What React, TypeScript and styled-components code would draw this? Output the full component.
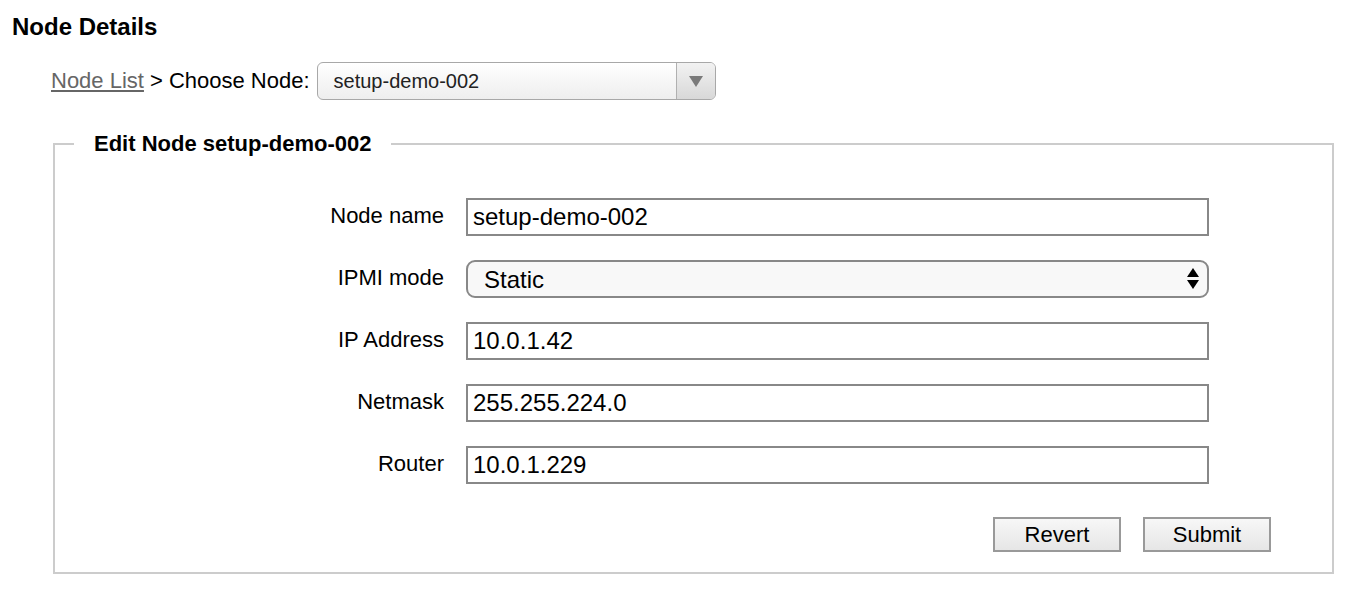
import styled, { createGlobalStyle } from "styled-components";

const GlobalStyle = createGlobalStyle`
  body {
    margin: 0;
    background: #ffffff;
    font-family: "Liberation Sans", Arial, Helvetica, sans-serif;
    color: #000;
  }
`;

const Page = styled.div`
  padding: 13px 0 0 12px;
`;

const Title = styled.h2`
  margin: 0;
  font-size: 24px;
  line-height: 28px;
  font-weight: bold;
`;

const Breadcrumb = styled.div`
  display: flex;
  align-items: center;
  margin: 21px 0 0 39px;
  font-size: 22px;
  height: 38px;
`;

const CrumbLink = styled.a`
  color: #666;
  text-decoration: underline;
  margin-right: 6px;
`;

const CrumbText = styled.span`
  margin-right: 7px;
`;

const NodePicker = styled.div`
  display: flex;
  width: 399px;
  height: 38px;
  box-sizing: border-box;
  border: 1.5px solid #a8a8a8;
  border-radius: 6px;
  background: linear-gradient(#ffffff, #eeeeee);
  overflow: hidden;
`;

const PickerValue = styled.div`
  flex: 1;
  display: flex;
  align-items: center;
  padding-left: 16px;
  font-size: 20px;
  color: #222;
`;

const PickerArrow = styled.div`
  width: 38px;
  border-left: 1.5px solid #b0b0b0;
  background: linear-gradient(#f2f2f2, #d8d8d8);
  display: flex;
  align-items: center;
  justify-content: center;
`;

const Box = styled.fieldset`
  margin: 31px 0 0 41px;
  width: 1281px;
  box-sizing: border-box;
  border: 2px solid #cccccc;
  padding: 41px 61px 20px 19px;
`;

const Legend = styled.legend`
  padding: 0 20px;
  font-size: 22px;
  line-height: 26px;
  font-weight: bold;
`;

const Form = styled.div`
  display: grid;
  grid-template-columns: 370px 743px;
  column-gap: 22px;
  row-gap: 24px;
  align-items: center;
`;

const Label = styled.label`
  text-align: right;
  font-size: 22px;
  padding-bottom: 3px;
`;

const TextInput = styled.input`
  width: 100%;
  height: 38px;
  box-sizing: border-box;
  border: 2px solid #888;
  border-radius: 0;
  padding: 0 5px;
  font-family: inherit;
  font-size: 24px;
  color: #000;
  outline: none;
`;

const SelectWrap = styled.div`
  position: relative;
  height: 38px;
`;

const Select = styled.select`
  appearance: none;
  width: 100%;
  height: 38px;
  box-sizing: border-box;
  border: 2px solid #888;
  border-radius: 9px;
  background: #f8f8f8;
  padding: 0 16px;
  font-family: inherit;
  font-size: 24px;
  color: #000;
  outline: none;
`;

const Arrows = styled.svg`
  position: absolute;
  right: 10px;
  top: 8px;
  pointer-events: none;
`;

const Actions = styled.div`
  display: flex;
  justify-content: flex-end;
  gap: 22px;
  margin-top: 33px;
`;

const Button = styled.button`
  width: 128px;
  height: 35px;
  box-sizing: border-box;
  border: 2px solid #999;
  border-radius: 0;
  background: linear-gradient(#f7f7f7, #e6e6e6);
  font-family: inherit;
  font-size: 22px;
  color: #000;
  padding: 0;
`;

const fields = [
  { label: "Node name", value: "setup-demo-002" },
  { label: "IPMI mode", select: ["Static", "DHCP"] },
  { label: "IP Address", value: "10.0.1.42" },
  { label: "Netmask", value: "255.255.224.0" },
  { label: "Router", value: "10.0.1.229" },
];

export default function App() {
  return (
    <Page>
      <GlobalStyle />
      <Title>Node Details</Title>
      <Breadcrumb>
        <CrumbLink href="#">Node List</CrumbLink>
        <CrumbText>&gt; Choose Node:</CrumbText>
        <NodePicker>
          <PickerValue>setup-demo-002</PickerValue>
          <PickerArrow>
            <svg width="14" height="11" viewBox="0 0 14 11">
              <path d="M0 0 H14 L7 11 Z" fill="#7a7a7a" />
            </svg>
          </PickerArrow>
        </NodePicker>
      </Breadcrumb>
      <Box>
        <Legend>Edit Node setup-demo-002</Legend>
        <Form>
          {fields.map((f) => [
            <Label key={f.label + "-l"}>{f.label}</Label>,
            f.select ? (
              <SelectWrap key={f.label + "-s"}>
                <Select defaultValue={f.select[0]}>
                  {f.select.map((o) => (
                    <option key={o}>{o}</option>
                  ))}
                </Select>
                <Arrows width="12" height="22" viewBox="0 0 12 22">
                  <path d="M6 0 L12 9 H0 Z" fill="#000" />
                  <path d="M0 12 H12 L6 21 Z" fill="#000" />
                </Arrows>
              </SelectWrap>
            ) : (
              <TextInput key={f.label + "-i"} defaultValue={f.value} />
            ),
          ])}
        </Form>
        <Actions>
          <Button>Revert</Button>
          <Button>Submit</Button>
        </Actions>
      </Box>
    </Page>
  );
}
